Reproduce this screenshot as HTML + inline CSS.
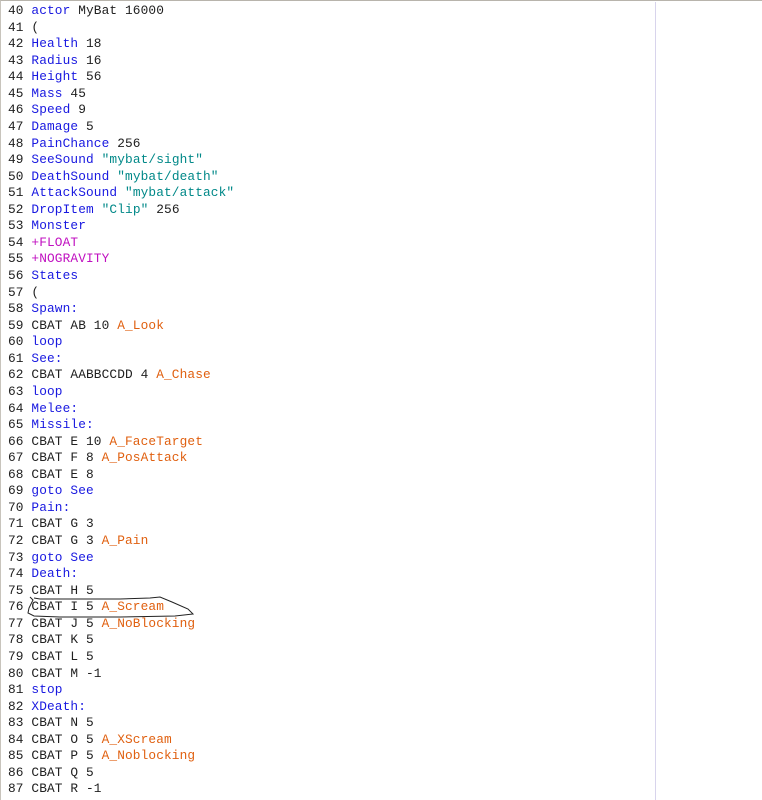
<!DOCTYPE html>
<html><head><style>
body{margin:0;width:762px;height:800px;background:#fff;overflow:hidden;position:relative;}
#f{position:absolute;left:0;top:0;width:762px;height:800px;border-top:1px solid #b8b4ac;border-left:1px solid #c8c4bc;box-sizing:border-box;}
#v{position:absolute;left:655px;top:2px;width:1px;height:798px;background:#d8d4ec;}
pre{position:absolute;left:8px;top:3px;margin:0;font:12.8px/16.57px "Liberation Mono",monospace;letter-spacing:0.12px;color:#202020;}
.k{color:#1818e0}.s{color:#008888}.a{color:#e06010}.p{color:#c010c0}
</style></head><body><div id="f"></div><div id="v"></div>
<pre>40 <span class="k">actor</span> MyBat 16000
41 (
42 <span class="k">Health</span> 18
43 <span class="k">Radius</span> 16
44 <span class="k">Height</span> 56
45 <span class="k">Mass</span> 45
46 <span class="k">Speed</span> 9
47 <span class="k">Damage</span> 5
48 <span class="k">PainChance</span> 256
49 <span class="k">SeeSound</span> <span class="s">"mybat/sight"</span>
50 <span class="k">DeathSound</span> <span class="s">"mybat/death"</span>
51 <span class="k">AttackSound</span> <span class="s">"mybat/attack"</span>
52 <span class="k">DropItem</span> <span class="s">"Clip"</span> 256
53 <span class="k">Monster</span>
54 <span class="p">+FLOAT</span>
55 <span class="p">+NOGRAVITY</span>
56 <span class="k">States</span>
57 (
58 <span class="k">Spawn:</span>
59 CBAT AB 10 <span class="a">A_Look</span>
60 <span class="k">loop</span>
61 <span class="k">See:</span>
62 CBAT AABBCCDD 4 <span class="a">A_Chase</span>
63 <span class="k">loop</span>
64 <span class="k">Melee:</span>
65 <span class="k">Missile:</span>
66 CBAT E 10 <span class="a">A_FaceTarget</span>
67 CBAT F 8 <span class="a">A_PosAttack</span>
68 CBAT E 8
69 <span class="k">goto See</span>
70 <span class="k">Pain:</span>
71 CBAT G 3
72 CBAT G 3 <span class="a">A_Pain</span>
73 <span class="k">goto See</span>
74 <span class="k">Death:</span>
75 CBAT H 5
76 CBAT I 5 <span class="a">A_Scream</span>
77 CBAT J 5 <span class="a">A_NoBlocking</span>
78 CBAT K 5
79 CBAT L 5
80 CBAT M -1
81 <span class="k">stop</span>
82 <span class="k">XDeath:</span>
83 CBAT N 5
84 CBAT O 5 <span class="a">A_XScream</span>
85 CBAT P 5 <span class="a">A_Noblocking</span>
86 CBAT Q 5
87 CBAT R -1</pre>
<svg style="position:absolute;left:0;top:0" width="762" height="800"><path d="M30 597 L33 600 L31 604 L29 608 L28 613 L34 616 L60 617 L120 617 L175 616 L193 614 L188 609 L172 602 L160 597 L150 598 L120 599 L80 599 L40 599 L34 598" fill="none" stroke="#222" stroke-width="1"/></svg>
</body></html>
